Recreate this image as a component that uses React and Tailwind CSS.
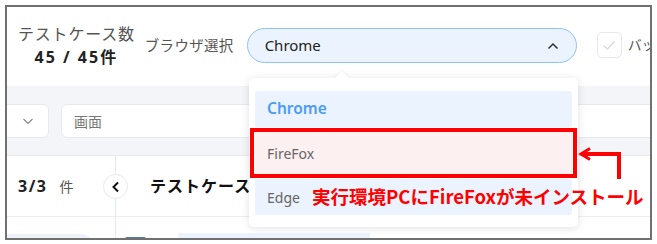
import React from 'react';

const font = { fontFamily: '"Noto Sans", "Noto Sans CJK JP", sans-serif' };

const ChevronUp = () => (
  <svg width="14" height="14" viewBox="0 0 14 14" fill="none" stroke="#333" strokeWidth="1.5">
    <path d="M2.5 9.5 L7 5 L11.5 9.5" />
  </svg>
);

const ChevronDown = () => (
  <svg width="14" height="14" viewBox="0 0 14 14" fill="none" stroke="#888" strokeWidth="1.2">
    <path d="M2.5 5 L7 9.5 L11.5 5" />
  </svg>
);

const Header = () => (
  <div className="flex items-start h-[79px] pl-[11px] whitespace-nowrap">
    <div className="flex flex-col items-center mt-[17px] shrink-0">
      <span className="text-[16px] leading-[20px] text-[#555] tracking-[0.8px]">テストケース数</span>
      <span className="text-[16px] leading-[20px] font-bold text-[#222] tracking-[2px] mt-[3px]">45 / 45件</span>
    </div>
    <span className="shrink-0 ml-[10px] mt-[28px] text-[14.5px] leading-[20px] text-[#555] tracking-[0.3px]">ブラウザ選択</span>
    <div className="shrink-0 ml-[13px] mt-[21px] w-[330px] h-[35px] rounded-full border border-[#90c2f7] bg-[#ebf4fe] flex items-center justify-between pl-[17px] pr-[16px]">
      <span className="text-[15px] text-[#222]">Chrome</span>
      <ChevronUp />
    </div>
    <div className="shrink-0 ml-[20px] mt-[25px] w-[25px] h-[26px] rounded-[5px] border border-[#e6e8ec] flex items-center justify-center">
      <svg width="16" height="16" viewBox="0 0 16 16" fill="none" stroke="#d8dbe0" strokeWidth="1.5">
        <path d="M2.5 8.5 L6.5 12 L13.5 4.5" />
      </svg>
    </div>
    <span className="shrink-0 ml-[6px] mt-[28px] text-[14px] leading-[20px] text-[#555]">バッチ</span>
  </div>
);

const Filters = () => (
  <div className="h-[70px] bg-[#f3f5f9] border-b border-[#e8ebf0] flex items-start pt-[18px]">
    <div className="shrink-0 -ml-[18px] w-[60px] h-[34px] bg-white rounded-[6px] border border-[#e6e9ee] flex items-center justify-end pr-[13px]">
      <ChevronDown />
    </div>
    <div className="shrink-0 ml-[12px] w-[600px] h-[34px] bg-white rounded-[6px] border border-[#e6e9ee] flex items-center pl-[12px]">
      <span className="text-[14px] text-[#777]">画面</span>
    </div>
  </div>
);

const Content = () => (
  <div className="flex">
    <div className="w-[109px] shrink-0 border-r border-[#e6e9ee]">
      <div className="h-[61px] flex items-center pl-[11px] border-b border-[#eceef2]">
        <span className="text-[16px] font-bold text-[#222] tracking-[1.5px]">3/3</span>
        <span className="ml-[12px] text-[14px] text-[#555]">件</span>
      </div>
      <div className="mt-[17px] -ml-[2px] w-[87px] h-[10px] bg-[#eef2f8] rounded-tr-[12px]" />
    </div>
    <div className="flex-1 relative">
      <div className="absolute -left-[13px] top-[18px] w-[25px] h-[25px] rounded-full bg-white border border-[#e6e9ee] flex items-center justify-center">
        <svg width="12" height="12" viewBox="0 0 12 12" fill="none" stroke="#111" strokeWidth="2">
          <path d="M8 1.5 L3.5 6 L8 10.5" />
        </svg>
      </div>
      <div className="h-[61px] flex items-center pl-[34px] border-b border-[#eceef2]">
        <span className="text-[16px] font-bold text-[#111] tracking-[1px] whitespace-nowrap">テストケース一覧</span>
      </div>
      <div className="flex items-start mt-[16px]">
        <div className="ml-[9px] w-[21px] h-[6px] mt-[4px] bg-[#4c7cb4] rounded-t-[2px]" />
        <div className="ml-[32px] w-[192px] h-[10px] bg-[#ecf3fd]" />
      </div>
    </div>
  </div>
);

const Dropdown = () => (
  <div className="absolute left-[242px] top-[71px] w-[329px] h-[149px] bg-white rounded-[5px] shadow-[0_1px_8px_rgba(0,0,0,0.12)] pt-[13px] px-[6px]">
    <div className="absolute left-[88px] -top-[5px] w-[10px] h-[10px] bg-white rotate-45 shadow-[-1px_-1px_2px_rgba(0,0,0,0.06)]" />
    <div className="h-[36px] rounded-[3px] bg-[#ebf3fe] flex items-center pl-[12px]">
      <span className="text-[15.5px] font-semibold text-[#4d9bf5]">Chrome</span>
    </div>
    <div className="mt-[5px] h-[42px] bg-[#fdf0f0] flex items-center pl-[12px]">
      <span className="text-[14px] text-[#666]">FireFox</span>
    </div>
    <div className="mt-[5px] h-[36px] rounded-[3px] bg-[#ebf3fe] flex items-center pl-[12px]">
      <span className="text-[14px] text-[#666]">Edge</span>
    </div>
    <div className="absolute left-[1px] top-[50px] w-[327px] h-[50px] border-[4px] border-[#ff0000]" />
  </div>
);

const Annotation = () => (
  <>
    <svg className="absolute left-[571px] top-[140px]" width="48" height="32" viewBox="0 0 48 32" fill="none" stroke="#ff0000" strokeWidth="4">
      <path d="M3 7 L41 7 L41 32" />
      <path d="M12 1.5 L3 7 L12 12.5" strokeWidth="3" />
    </svg>
    <span className="absolute left-[305px] top-[177px] text-[18.5px] leading-[24px] font-bold text-[#ff0000] whitespace-nowrap" style={{ fontFamily: '"Noto Sans CJK JP", sans-serif' }}>
      実行環境PCにFireFoxが未インストール
    </span>
  </>
);

export default function App() {
  return (
    <div className="w-[657px] h-[244px] bg-white overflow-hidden" style={font}>
      <div className="ml-[5px] mt-[5px] w-[647px] h-[235px] border-2 border-[#707070] overflow-hidden relative bg-white">
        <Header />
        <Filters />
        <Content />
        <Dropdown />
        <Annotation />
      </div>
    </div>
  );
}
